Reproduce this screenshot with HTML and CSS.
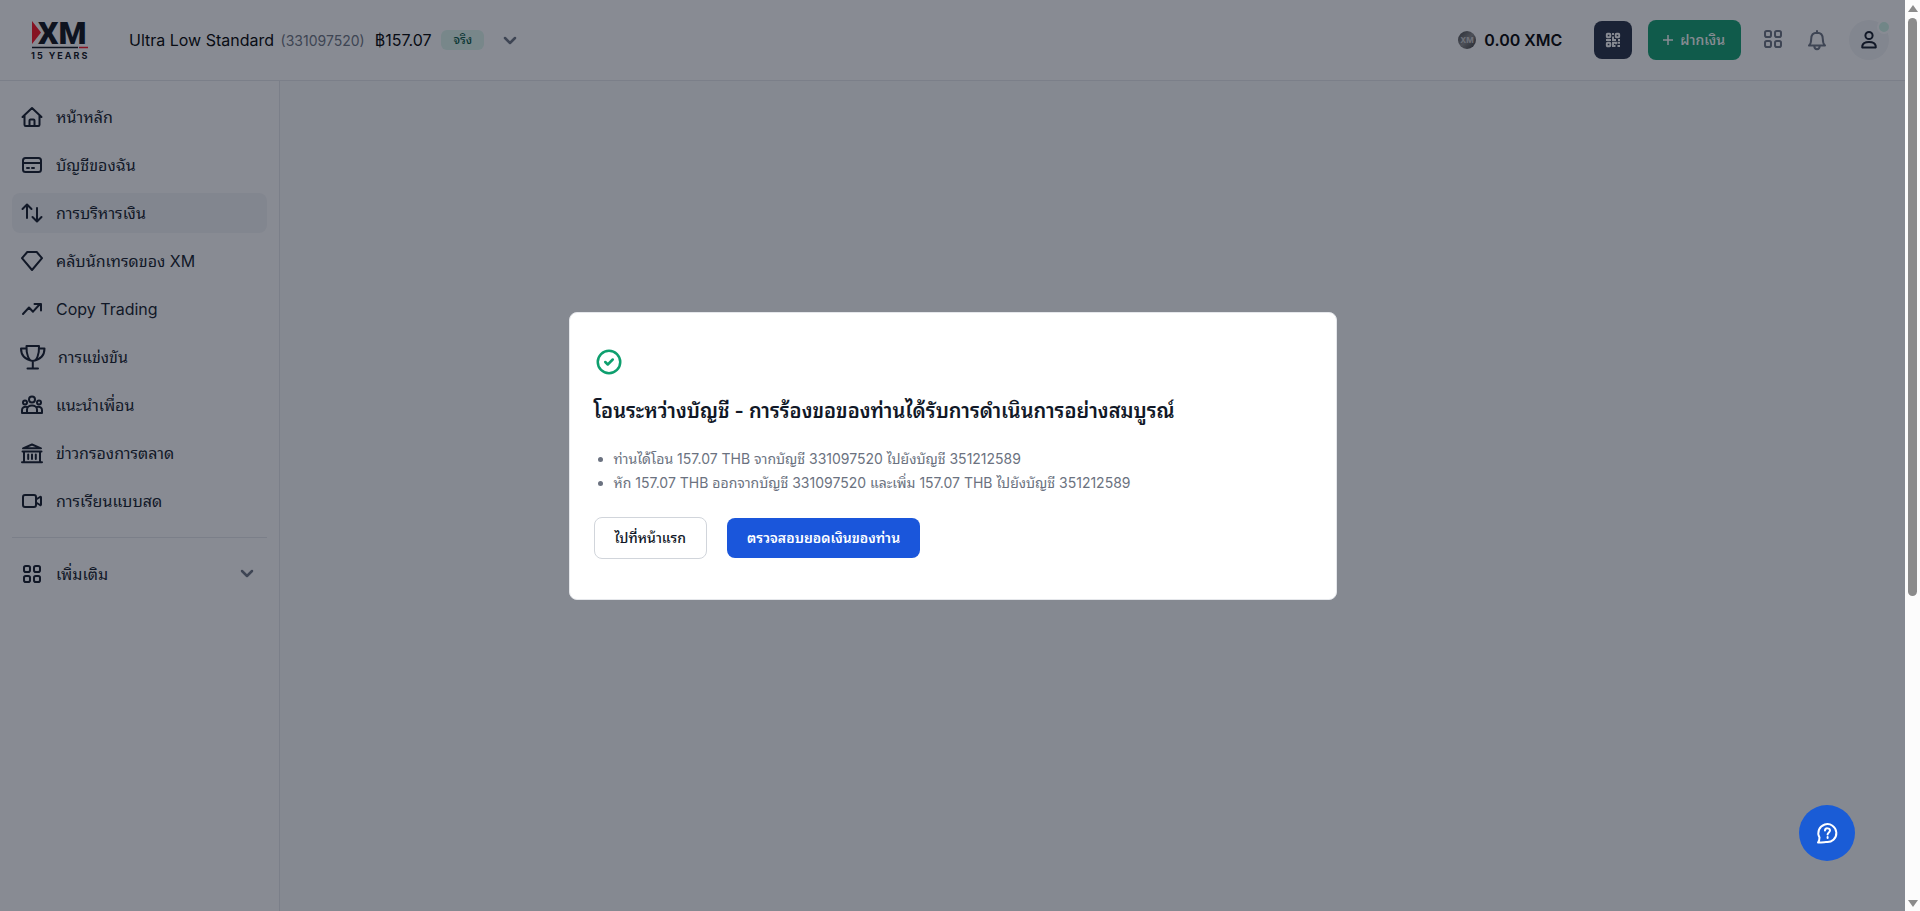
FILE: index.html
```html
<!DOCTYPE html>
<html lang="th">
<head>
<meta charset="UTF-8">
<meta name="viewport" content="width=device-width, initial-scale=1.0">
<title>XM - โอนระหว่างบัญชี</title>
<link rel="stylesheet" href="styles.css">
</head>
<body>
  <div class="app">
    <header class="topbar">
      <a href="#" class="logo" aria-label="XM 15 years">
        <svg width="60" height="58" viewBox="0 -8 60 58">
          <path d="M2 2 11 13.500 2 25z" fill="#fa0f1e"/>
          <text class="logo-xm" x="8" y="25">XM</text>
          <path d="M2 28.500h46" stroke="#0b0f17" stroke-width="1.500"/>
          <path d="M49 28.500h9" stroke="#fa0f1e" stroke-width="1.500"/>
          <text class="logo-years" x="1" y="40">15 YEARS</text>
        </svg>
      </a>
      <button class="account">
        <span class="account-name">Ultra Low Standard <small>(331097520)</small></span>
        <span class="account-balance">฿157.07</span>
        <span class="badge">จริง</span>
        <svg class="chevron" width="20" height="20" viewBox="0 0 20 20"><path d="m5 8 5 5 5-5"/></svg>
      </button>
      <div class="actions">
        <div class="coins">
          <svg width="18" height="18" viewBox="0 0 18 18">
            <defs><linearGradient id="coin" x2="1" y2="1"><stop offset="0" stop-color="#444"/><stop offset=".5" stop-color="#888"/><stop offset="1" stop-color="#333"/></linearGradient></defs>
            <circle cx="9" cy="9" r="9" fill="url(#coin)"/>
            <text class="coin-text" x="9" y="12">XM</text>
          </svg>
          <span>0.00 XMC</span>
        </div>
        <button class="qr" aria-label="QR">
          <svg width="16" height="16" viewBox="0 0 16 16" fill="none" stroke="#fff" stroke-width="1.900">
            <rect x="1.800" y="1.800" width="3.500" height="3.500" rx=".8"/><rect x="10.700" y="1.800" width="3.500" height="3.500" rx=".8"/><rect x="1.800" y="10.700" width="3.500" height="3.500" rx=".8"/>
            <path d="M8 1v2M8 4.500V8h3M1 8h5M13 8h2M8 15v-4.300h3v1.500M12.500 10.700H15M12.500 14H15M9 14h1.500"/>
          </svg>
        </button>
        <button class="deposit">
          <svg width="16" height="16" viewBox="0 0 16 16"><path d="M8 3v10M3 8h10" stroke="#fff" stroke-width="1.500"/></svg>
          ฝากเงิน
        </button>
        <button class="icon-btn" aria-label="Apps">
          <svg class="icon" width="24" height="24" viewBox="0 0 24 24"><rect x="4" y="3" width="6" height="6" rx="1.800"/><rect x="14" y="3" width="6" height="6" rx="1.800"/><rect x="4" y="13" width="6" height="6" rx="1.800"/><rect x="14" y="13" width="6" height="6" rx="1.800"/></svg>
        </button>
        <button class="icon-btn" aria-label="Notifications">
          <svg class="icon" width="24" height="24" viewBox="0 0 24 24"><path d="M4 17.500h16c-2-1.700-2.200-3.500-2.200-6.500 0-4-2-6.200-5.800-6.200S6.200 7 6.200 11c0 3-.2 4.800-2.200 6.500zM12 3v2M9.300 18c0 4.200 5.400 4.200 5.400 0"/></svg>
        </button>
        <button class="avatar" aria-label="Profile">
          <svg class="icon" width="24" height="24" viewBox="0 0 24 24"><circle cx="12" cy="7.500" r="3.600"/><path d="M6 19.500c-.8 0-1-.5-.8-1.300C5.700 15.500 7.500 14 12 14s6.300 1.500 6.800 4.200c.2.800 0 1.300-.8 1.300z"/></svg>
          <span class="dot"></span>
        </button>
      </div>
    </header>

    <div class="main">
      <nav class="sidebar">
        <a href="#" class="nav-item">
          <svg class="icon" width="24" height="24" viewBox="0 0 24 24"><path d="M2.500 12 12 3l9.500 9M4.500 10.500v9.300c0 .7.400 1.200 1.200 1.200h12.600c.8 0 1.200-.5 1.200-1.200v-9.300M9.500 21v-5.500c0-.6.400-1 1-1h3c.6 0 1 .4 1 1V21"/></svg>
          หน้าหลัก
        </a>
        <a href="#" class="nav-item">
          <svg class="icon" width="24" height="24" viewBox="0 0 24 24"><rect x="3" y="5" width="18" height="14" rx="2.500"/><path d="M3 10h18M7 15h2M12 15h2"/></svg>
          บัญชีของฉัน
        </a>
        <a href="#" class="nav-item active">
          <svg class="icon" width="24" height="24" viewBox="0 0 24 24"><path d="M7 17V4M2.500 8 7 3.500 11.500 8M17 7v13M12.500 16l4.500 4.500 4.500-4.500"/></svg>
          การบริหารเงิน
        </a>
        <a href="#" class="nav-item">
          <svg class="icon" width="24" height="24" viewBox="0 0 24 24"><path d="M7.300 3h9.400L22 9.200 12 21 2 9.200z"/></svg>
          คลับนักเทรดของ XM
        </a>
        <a href="#" class="nav-item">
          <svg class="icon" width="24" height="24" viewBox="0 0 24 24"><path d="m3 17 6-6.500 4 4.200 7-7.700M14.500 7H21v6.500"/></svg>
          Copy Trading
        </a>
        <a href="#" class="nav-item">
          <svg class="icon" width="26" height="26" viewBox="0 0 26 26"><path d="M6.500 2h12.500c.3 8-2 15-6.200 15S6.200 10 6.500 2zM6.500 4.500H1c0 6 3.500 11 11.800 12.500M19 4.500h5.500c0 6-3.500 11-11.700 12.500M12.800 17v7.500M7.500 24.500H18"/></svg>
          การแข่งขัน
        </a>
        <a href="#" class="nav-item">
          <svg class="icon" width="24" height="24" viewBox="0 0 24 24"><circle cx="12" cy="6.500" r="3"/><circle cx="5" cy="9.500" r="2"/><circle cx="19" cy="9.500" r="2"/><path d="M7 20v-3.500c0-5.300 10-5.300 10 0V20zM7 20H2v-3c0-2.500 2-3.500 5-3M17 20h5v-3c0-2.500-2-3.500-5-3"/></svg>
          แนะนำเพื่อน
        </a>
        <a href="#" class="nav-item">
          <svg class="icon" width="24" height="24" viewBox="0 0 24 24"><path d="M3 7.300h18L12 3.500zM2.500 10.500h19M4 10.500V20M20 10.500V20M2 21.300h20M8.200 13.500V18M12 13.500V18M15.800 13.500V18"/></svg>
          ข่าวกรองการตลาด
        </a>
        <a href="#" class="nav-item">
          <svg class="icon" width="24" height="24" viewBox="0 0 24 24"><rect x="3" y="6" width="13" height="12" rx="2"/><path d="m16 10.500 4-2.500c.6-.3 1 0 1 .5v7c0 .5-.4.800-1 .5l-4-2.500"/></svg>
          การเรียนแบบสด
        </a>
        <hr>
        <button class="nav-item more">
          <svg class="icon" width="24" height="24" viewBox="0 0 24 24"><rect x="4" y="4" width="6" height="6" rx="1.800"/><rect x="14" y="4" width="6" height="6" rx="1.800"/><rect x="4" y="14" width="6" height="6" rx="1.800"/><rect x="14" y="14" width="6" height="6" rx="1.800"/></svg>
          เพิ่มเติม
          <svg class="chevron" width="20" height="20" viewBox="0 0 20 20"><path d="m5 7 5 5 5-5"/></svg>
        </button>
      </nav>
      <main class="content"></main>
    </div>

    <div class="overlay">
      <div class="modal" role="dialog" aria-labelledby="modal-title">
        <svg class="success" width="30" height="30" viewBox="0 0 24 24"><circle cx="12" cy="12" r="9"/><path d="m9 12 2 2 4-4"/></svg>
        <h2 id="modal-title">โอนระหว่างบัญชี - การร้องขอของท่านได้รับการดำเนินการอย่างสมบูรณ์</h2>
        <ul>
          <li>ท่านได้โอน 157.07 THB จากบัญชี 331097520 ไปยังบัญชี 351212589</li>
          <li>หัก 157.07 THB ออกจากบัญชี 331097520 และเพิ่ม 157.07 THB ไปยังบัญชี 351212589</li>
        </ul>
        <div class="modal-buttons">
          <button class="btn btn-outline">ไปที่หน้าแรก</button>
          <button class="btn btn-primary">ตรวจสอบยอดเงินของท่าน</button>
        </div>
      </div>
    </div>

    <button class="help" aria-label="Help">
      <svg width="24" height="24" viewBox="0 0 24 24"><path d="M3 21.500c1.300-1.700 1.500-3 1.500-5A9 9 0 1 1 11 21c-1.500 0-3 .5-8 .5zM10 9.500c.2-3 5-2.700 5 .1 0 1.900-2.400 1.900-2.400 4M12.600 16v1"/></svg>
    </button>
  </div>

  <div class="scrollbar">
    <span class="arrow up"></span>
    <div class="track"><div class="thumb"></div></div>
    <span class="arrow down"></span>
  </div>
</body>
</html>
```
FILE: styles.css
```css
* {
  box-sizing: border-box;
}

body {
  margin: 0;
  display: flex;
  min-height: 100vh;
  font-family: Inter, "Noto Sans Thai Looped", Loma, sans-serif;
  font-size: 16px;
  line-height: 24px;
  color: #111827;
}

button {
  font: inherit;
  color: inherit;
  background: none;
  border: none;
  padding: 0;
}

svg {
  display: block;
  flex-shrink: 0;
}

.app {
  position: relative;
  flex: 1;
  display: flex;
  flex-direction: column;
  background: #fff;
}

.icon {
  fill: none;
  stroke: currentColor;
  stroke-width: 2;
  stroke-linecap: round;
  stroke-linejoin: round;
}

.chevron {
  fill: none;
  stroke: #6b7280;
  stroke-width: 2.5;
  stroke-linecap: round;
  stroke-linejoin: round;
}

/* top bar */
.topbar {
  display: flex;
  align-items: center;
  height: 81px;
  padding: 0 16px 0 30px;
  border-bottom: 1px solid #e5e7eb;
}

.logo {
  margin-right: 39px;
}

.logo-xm {
  font: 900 32px Roboto, sans-serif;
  fill: #0b0f17;
}

.logo-years {
  font: 700 9px Inter, sans-serif;
  letter-spacing: 2px;
  fill: #0b0f17;
}

.account {
  display: flex;
  align-items: center;
  gap: 10px;
  color: #000;
}

.account small {
  margin-left: 2px;
  font-size: 14px;
  color: #6b7280;
}

.badge {
  padding: 0 12px;
  border-radius: 6px;
  background: #def7ec;
  color: #03543f;
  font-size: 12px;
  font-weight: 500;
  line-height: 20px;
}

.account .chevron {
  margin-left: 6px;
}

.actions {
  display: flex;
  align-items: center;
  margin-left: auto;
}

.coins {
  display: flex;
  align-items: center;
  gap: 8px;
  margin-right: 32px;
  color: #000;
  font-weight: 600;
}

.coin-text {
  font: 700 8px Inter, sans-serif;
  fill: #ccc;
  text-anchor: middle;
}

.qr {
  display: flex;
  align-items: center;
  justify-content: center;
  width: 38px;
  height: 38px;
  margin-right: 16px;
  border-radius: 8px;
  background: #232c42;
}

.deposit {
  display: flex;
  align-items: center;
  gap: 4px;
  height: 40px;
  margin-right: 20px;
  padding: 0 16px 0 12px;
  border-radius: 8px;
  background: #0e9f6e;
  color: #fff;
  font-size: 14px;
  font-weight: 500;
}

.icon-btn {
  margin-right: 20px;
  color: #6b7280;
}

.avatar {
  position: relative;
  display: flex;
  align-items: center;
  justify-content: center;
  width: 40px;
  height: 40px;
  border-radius: 50%;
  background: #f3f4f6;
}

.dot {
  position: absolute;
  top: 0;
  right: -2px;
  width: 14px;
  height: 14px;
  border: 2px solid #fff;
  border-radius: 50%;
  background: #d0f5e6;
}

/* sidebar */
.main {
  flex: 1;
  display: flex;
}

.sidebar {
  display: flex;
  flex-direction: column;
  gap: 8px;
  width: 280px;
  padding: 16px 12px;
  border-right: 1px solid #e5e7eb;
}

.nav-item {
  display: flex;
  align-items: center;
  gap: 12px;
  height: 40px;
  padding: 0 8px;
  border-radius: 8px;
  color: #111827;
  text-decoration: none;
}

.nav-item.active {
  background: #f3f4f6;
}

.sidebar hr {
  width: 100%;
  margin: 8px 0;
  border: none;
  border-top: 1px solid #e5e7eb;
}

.more {
  padding-right: 10px;
}

.more .chevron {
  margin-left: auto;
}

.content {
  flex: 1;
  background: #f9fafb;
}

/* modal */
.overlay {
  position: absolute;
  inset: 0;
  display: flex;
  align-items: center;
  justify-content: center;
  background: rgba(17, 24, 39, 0.5);
}

.modal {
  width: 768px;
  padding: 34px 24px 40px;
  border: 1px solid #e5e7eb;
  border-radius: 8px;
  background: #fff;
}

.success {
  fill: none;
  stroke: #0e9f6e;
  stroke-width: 2;
  stroke-linecap: round;
  stroke-linejoin: round;
}

.modal h2 {
  margin: 18px 0 20px;
  font-size: 20px;
  font-weight: 600;
  line-height: 32px;
}

.modal ul {
  margin: 0 0 22px;
  padding-left: 20px;
  color: #6b7280;
  font-size: 14px;
}

.modal-buttons {
  display: flex;
  align-items: center;
  gap: 20px;
}

.btn {
  padding: 8px 20px;
  border-radius: 8px;
  font-size: 14px;
  font-weight: 500;
}

.btn-outline {
  border: 1px solid #d1d5db;
}

.btn-primary {
  background: #1a56db;
  color: #fff;
  font-weight: 600;
}

.help {
  position: absolute;
  right: 50px;
  bottom: 50px;
  display: flex;
  align-items: center;
  justify-content: center;
  width: 56px;
  height: 56px;
  border-radius: 50%;
  background: #1a5cd6;
}

.help svg {
  fill: none;
  stroke: #fff;
  stroke-width: 2;
  stroke-linecap: round;
  stroke-linejoin: round;
}

/* scrollbar */
.scrollbar {
  display: flex;
  flex-direction: column;
  align-items: center;
  width: 15px;
  padding: 5px 0 4px;
  background: #fcfcfc;
}

.track {
  flex: 1;
  width: 9px;
  margin: 6px 0;
}

.thumb {
  height: 66%;
  border-radius: 5px;
  background: #8b8b8b;
}

.arrow {
  border: 5px solid transparent;
}

.arrow.up {
  border-top: none;
  border-bottom: 7px solid #8b8b8b;
}

.arrow.down {
  border-bottom: none;
  border-top: 7px solid #8b8b8b;
}
```
